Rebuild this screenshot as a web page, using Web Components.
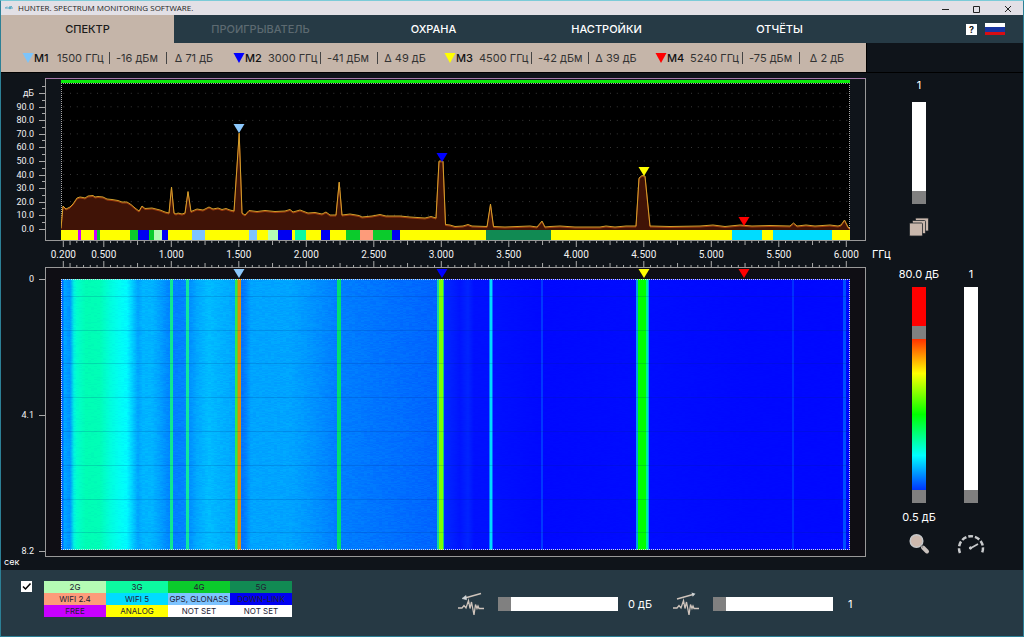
<!DOCTYPE html>
<html lang="ru">
<head>
<meta charset="utf-8">
<title>HUNTER. SPECTRUM MONITORING SOFTWARE.</title>
<style>
html,body{margin:0;height:100%}
body{background:#0f141a;color:#fff;font:11px/14px Inter,"Liberation Sans",sans-serif}
</style>
</head>
<body>
<hunter-app></hunter-app>
<script>
const define = (name, html, setup) => customElements.define(name, class extends HTMLElement {
  connectedCallback() {
    if (this.shadowRoot) return;
    const root = this.attachShadow({mode: 'open'});
    root.innerHTML = typeof html === 'function' ? html(this) : html;
    if (setup) setup(this, root);
  }
});

/* Frequency (GHz) to a percentage of the plot width. */
const PLOT_X = 61, PLOT_W = 789;
const pct = f => (63.3 + (f - 0.2) * 135 - PLOT_X) / PLOT_W * 100;

define('title-bar', `
<style>
:host{display:flex;align-items:center;height:14px;background:#e2e0e6;color:#222;font:8px/14px "Open Sans",sans-serif;padding-left:4px}
.logo{width:8px;height:6px;margin-right:5px}
.name{flex:1}
button{all:unset;width:31px;height:14px;display:grid;place-items:center;padding-top:2px;box-sizing:border-box}
svg{display:block}
</style>
<svg class="logo" viewBox="0 0 8 6"><path d="M0 3h8M2 1.500l-1.500 1.500M4 2l3-.5" stroke="#5aa9c4" fill="none"/><circle cx="5" cy="3" r="1.300" fill="#5aa9c4"/></svg>
<span class="name"><slot></slot></span>
<button aria-label="Свернуть"><svg width="8" height="8" stroke="#222"><path d="M0 4.500h7"/></svg></button>
<button aria-label="Развернуть"><svg width="8" height="8" stroke="#222" fill="none"><path d="M.5 1.500h6v6h-6z"/></svg></button>
<button aria-label="Закрыть"><svg width="8" height="8" stroke="#222"><path d="M1 1l6 6M7 1l-6 6"/></svg></button>`);

define('nav-tabs', `
<style>
:host{display:flex;height:28px;background:#263a45}
nav{flex:1;display:grid;grid-template-columns:repeat(5,1fr)}
button{all:unset;text-align:center;font-weight:500;color:#fff}
button:disabled{color:#5d6a71}
button[aria-current]{background:#c5b5a9;color:#1b1b1b}
.tools{width:157px;box-sizing:border-box;padding-right:18px;display:flex;justify-content:flex-end;align-items:center;gap:8px}
.help{width:11px;height:11px;background:#fff;color:#111;font:bold 9px/11px Inter,sans-serif}
svg{display:block}
</style>
<nav>
<button aria-current="page">СПЕКТР</button><button disabled>ПРОИГРЫВАТЕЛЬ</button><button>ОХРАНА</button><button>НАСТРОЙКИ</button><button>ОТЧЁТЫ</button>
</nav>
<div class="tools"><button class="help">?</button>
<button aria-label="Русский"><svg width="20" height="14"><rect y="1" width="20" height="4" fill="#fff"/><rect y="5" width="20" height="5" fill="#1834a0"/><rect y="10" width="20" height="3" fill="#d80d12"/></svg></button></div>`);

define('marker-readout', el => `
<style>
:host{display:flex;align-items:center;white-space:nowrap;color:#333;font-size:11px}
svg{width:12px;height:10px;flex:none}
b{font-weight:500;color:#111;width:23px}
.f{width:50px}.l{width:48px}.d{width:42px;text-align:center}
i{width:1px;height:12px;background:#444;margin:0 6px 0 2px}
</style>
<svg viewBox="0 0 12 10"><path d="M.5 0h11l-5.500 10z" fill="${el.getAttribute('color')}"/></svg>
<b>${el.getAttribute('name')}</b><span class="f">${el.getAttribute('freq')}</span><i></i>
<span class="l">${el.getAttribute('level')}</span><i></i><span class="d">${el.getAttribute('delta')}</span>`);

define('marker-bar', `
<style>
:host{display:flex;height:29px;border-bottom:1px solid #000}
.list{flex:1;background:#c5b5a9;display:grid;grid-template-columns:repeat(4,1fr);padding-left:21px}
.rest{width:157px;border-left:1px solid #000;box-sizing:border-box}
</style>
<div class="list">
<marker-readout color="#7cc4fb" name="M1" freq="1500 ГГц" level="-16 дБм" delta="Δ 71 дБ"></marker-readout>
<marker-readout color="#0000ff" name="M2" freq="3000 ГГц" level="-41 дБм" delta="Δ 49 дБ"></marker-readout>
<marker-readout color="#ffff00" name="M3" freq="4500 ГГц" level="-42 дБм" delta="Δ 39 дБ"></marker-readout>
<marker-readout color="#ff0000" name="M4" freq="5240 ГГц" level="-75 дБм" delta="Δ 2 дБ"></marker-readout>
</div><div class="rest"></div>`);

define('axis-scale', el => `
<style>
:host{display:flex;flex-direction:column;justify-content:space-between;font:9px/10px Roboto,sans-serif;color:#f2f2f2;box-sizing:border-box}
span{position:relative;height:10px;text-align:right;padding-right:11px}
span::after{content:"";position:absolute;right:0;top:5px;width:6px;height:1px;background:#aaa}
:host([minor]) span:not(:first-child)::before{content:"";position:absolute;right:0;top:-2px;width:3px;height:1px;background:#aaa}
:host([minor]) span:first-child{font-size:11px;padding-right:13px}
</style>${el.getAttribute('labels').split(' ').map(t => `<span>${t}</span>`).join('')}`);

define('plot-marker', el => `
<style>
:host{position:absolute;left:${pct(+el.getAttribute('at'))}%;bottom:${el.getAttribute('up') || 0}px;width:0;height:9px}
svg{display:block;width:12px;height:9px;margin-left:-6px}
</style><svg viewBox="0 0 12 9"><path d="M.5 0h11l-5.500 9z" fill="${el.getAttribute('color')}"/></svg>`);

const TRACE = 'M61 228L63 206L66 209L70 207L73 204L77 198L80 197L83 197.500L85 198L88 196L93 195.500L95 197L98 196.500L103 197L107 199L112 199.500L118 200.500L122 202L127 202L131 204.500L135 208L139 211L142 206L145 208.500L152 208L160 210L165 212L169 213L171.500 187L174 213L176 214L178 213L182 214L185 213L188 191.500L191 211.500L197 209L203 210L209 207L213 209L218 208L222 209.500L226 208.500L230 210L234 211L239.200 133L242 213L245 215L249 210.500L257 211.500L265 210.500L275 211.500L285 211L290 209.500L293 212L300 210L308 213L315 212.500L322 214L326 212L330 215L336 215L339.200 182L342 215L350 214L359 215.500L362 217L372 216L380 214.500L386 216L400 216L410 217L425 218L431 216.500L436 218L439 161L443 161L445.500 224.500L450 225L455 226.500L463 226L468 224.500L472 226L487 226.500L490.500 204L493.500 226.500L505 227L530 226L537 227L542 221L545 227L550 226.500L560 226L575 227L600 227L606 226L615 227L626 226L636 226L639 178L642 175.500L645 176L650 226L670 226.500L700 226L713 225L725 226.500L740 225L752 226L770 225.500L790 226L793.500 223L797 226L806 225L815 226L830 225L838 226L841 225L844.500 220L848 227L850 229';

const Y = '#ffff00', G = '#0bcb2c', B = '#0000f2', L = '#b5fbb4', S = '#7dc3ff', M = '#c800ff', A = '#0cfaa0', O = '#fd9b7a', D = '#118a53', C = '#00dcff';
const BANDS = [[78,Y],[81,M],[94,Y],[97,M],[100,G],[130,Y],[138,G],[149,B],[154,G],[162,L],[168,B],[192,Y],[205,S],[249,Y],[257,S],[268,Y],[278,L],[292,B],[295,Y],[306,A],[321,Y],[330,B],[346,Y],[360,G],[373,O],[392,G],[400,B],[486,Y],[551,D],[732,Y],[762,C],[773,Y],[832,C],[850,Y]];

define('spectrum-plot', () => {
  let last = PLOT_X;
  const bands = BANDS.map(([end, c]) => { const w = end - last; last = end; return `<i style="flex:${w} 0 0px;background:${c}"></i>`; }).join('');
  let dots = '';
  for (let f = .2; f < 6.02; f += .05)
    for (let k = 1; k <= 10; k++) dots += `M${(63.3 + (f - .2) * 135).toFixed(1)} ${(228.7 - k * 13.54).toFixed(1)}h1`;
  return `
<style>
:host{display:flex;flex-direction:column;border:1px solid #999;border-top-color:#a678a8;padding:1px 15px 0;box-sizing:border-box}
.scan{height:3px;background:#0ceb0c}
.plot{position:relative;flex:1;background:#000;outline:1px dotted #a8a8a8;outline-offset:-1px;min-height:0}
.plot>svg{position:absolute;width:100%;height:100%}
.bands{display:flex;height:10px}
path{vector-effect:non-scaling-stroke}
</style>
<div class="scan"></div>
<div class="plot"><svg viewBox="61 83 789 147" preserveAspectRatio="none">
<path d="${dots}" stroke="#383838" fill="none"/>
<path d="${TRACE}V230H61Z" fill="#401306"/>
<path d="${TRACE}" transform="translate(0 1)" stroke="#a33c0c" fill="none"/>
<path d="${TRACE}" stroke="#d2a02c" fill="none"/></svg>
<plot-marker at="1.5" up="97" color="#8cc8fc"></plot-marker>
<plot-marker at="3.003" up="68" color="#0000ff"></plot-marker>
<plot-marker at="4.5" up="54" color="#ffff00"></plot-marker>
<plot-marker at="5.24" up="4" color="#ff0000"></plot-marker></div>
<div class="bands">${bands}</div>`;
});

define('frequency-axis', () => {
  let s = '';
  for (let i = 4; i <= 120; i++) {
    const f = i * .05, x = pct(f).toFixed(3) + '%';
    const n = i === 4 || i % 10 === 0 ? 6 : i % 5 === 0 ? 4 : 2;
    s += `<line x1="${x}" x2="${x}" y1="0" y2="${n}"/><line x1="${x}" x2="${x}" y1="${26 - n}" y2="26"/>`;
    if (n === 6) s += `<text x="${x}" y="17">${f.toFixed(3)}</text>`;
  }
  return `<style>:host{display:block;padding:0 16px}
svg{display:block;width:100%;height:26px;overflow:visible;stroke:#aaa}
text{font:10px Roboto,sans-serif;fill:#f2f2f2;stroke:none;text-anchor:middle}</style><svg>${s}</svg>`;
});

const STOPS = [[61,'#0050ff'],[63,'#0070ff'],[64,'#00a8ff'],[66,'#00a0ff'],[70,'#0094ff'],[74,'#00f0e0'],[77,'#00ffcc'],[86,'#00ffb4'],[100,'#00ffb8'],[110,'#00ffdc'],[120,'#00fff4'],[127,'#00f8ff'],[132,'#00d0ff'],[138,'#00a4ff'],[143,'#00b4ff'],[152,'#00b4ff'],[160,'#00a0ff'],[168,'#0088ff'],[175,'#0080ff'],[184,'#0084ff'],[191,'#0094ff'],[197,'#00a8ff'],[209,'#00bcff'],[216,'#00b4ff'],[234,'#00a8ff'],[242,'#0074ff'],[246,'#0084ff'],[251,'#00a4ff'],[290,'#00a4ff'],[312,'#0094ff'],[335,'#0080ff'],[380,'#0074ff'],[437,'#0064ff'],[445,'#0028ff'],[460,'#0014ff'],[468,'#0024ff'],[474,'#0010ff'],[492,'#0010ff'],[545,'#0008ff'],[650,'#000cff'],[750,'#0008ff'],[850,'#0008ff']];
const LINES = [[170,3,'#10e890'],[186,3,'#10e8a0'],[235,2,'#30e850'],[237,1,'#80c020'],[238,3,'#e08c10'],[337,4,'#00e070'],[437,2,'#10d8a0'],[439,4,'#80ff00'],[443,1,'#10d080'],[489,1,'#0080ff'],[490,2,'#00dcff'],[492,1,'#0070ff'],[541,2,'#0038ff'],[636,2,'#00a0e8'],[638,8,'#00ff00'],[646,2,'#00f0a0'],[648,1,'#00a0ff'],[792,2,'#0030ff'],[843,3,'#0050ff']];

define('waterfall-plot', `
<style>
:host{display:flex;flex-direction:column;border:1px solid #999;padding:0 15px 6px;box-sizing:border-box;background:#0f0e14;min-height:0}
.pins{position:relative;height:11px}
.view{flex:1;min-height:0;position:relative}
.view::after{content:"";position:absolute;inset:0;border:1px dotted #ddd}
canvas{position:absolute;width:100%;height:100%}
</style>
<div class="pins"><plot-marker up="1" at="1.5" color="#8cc8fc"></plot-marker><plot-marker up="1" at="3.003" color="#0000ff"></plot-marker><plot-marker up="1" at="4.5" color="#ffff00"></plot-marker><plot-marker up="1" at="5.24" color="#ff0000"></plot-marker></div>
<div class="view"><canvas width="789" height="271"></canvas></div>`, (el, root) => {
  const c = root.querySelector('canvas'), g = c.getContext('2d'), grad = g.createLinearGradient(0, 0, PLOT_W, 0);
  STOPS.forEach(([x, col]) => grad.addColorStop((x - PLOT_X) / PLOT_W, col));
  g.fillStyle = grad; g.fillRect(0, 0, PLOT_W, 271);
  let seed = 7;
  const rnd = () => (seed = (seed * 1103515245 + 12345) % 2147483648) / 2147483648;
  const img = g.getImageData(0, 0, PLOT_W, 271), d = img.data;
  for (let y = 0; y < 271; y++) for (let x = 0; x < PLOT_W; x += 3) {
    const amp = x < 380 ? 14 : 3, n = (rnd() - .5) * amp;
    for (let k = 0; k < 3 && x + k < PLOT_W; k++) { const i = (y * PLOT_W + x + k) * 4 + 1; d[i] += n; }
  }
  g.putImageData(img, 0, 0);
  LINES.forEach(([x, w, col]) => { g.fillStyle = col; g.fillRect(x - PLOT_X, 0, w, 271); });
  g.fillStyle = 'rgba(0,40,120,.16)';
  [17, 51, 84, 118, 152, 186, 220, 253].forEach(y => g.fillRect(0, y, PLOT_W, 1));
});

define('level-slider', el => {
  const v = el.hasAttribute('vertical');
  return `
<style>
:host{display:block;position:relative;${v ? 'width:14px' : 'width:120px;height:14px'}}
input{appearance:none;display:block;position:absolute;inset:0;margin:0;width:100%;height:100%;background:#fff;${v ? 'writing-mode:vertical-lr;direction:rtl' : ''}}
input::-webkit-slider-thumb{appearance:none;width:${v ? 14 : 13}px;height:${v ? 13 : 14}px;background:#808080;border:0;border-radius:0}
</style><input type="range" min="0" max="100" value="0" aria-label="${el.getAttribute('label')}">`;
});

define('palette-slider', `
<style>
:host{display:block;position:relative;width:14px;background:linear-gradient(#f00 0 22%,#ff3000 24%,#ff0 40%,#0f0 59%,#0ff 78%,#0040ff 93%,#0000c0)}
input{position:absolute;inset:0;appearance:none;margin:0;width:100%;height:100%;background:none;pointer-events:none;writing-mode:vertical-lr;direction:rtl}
input::-webkit-slider-thumb{appearance:none;pointer-events:auto;width:14px;height:13px;background:#808080;border:0}
</style>
<input type="range" min="0" max="100" value="81" aria-label="Верхний уровень"><input type="range" min="0" max="100" value="0" aria-label="Нижний уровень">`);

define('spectrum-tools', `
<style>
:host{display:flex;flex-direction:column;align-items:center;width:52px;margin-left:27px;box-sizing:border-box}
level-slider{height:102px;margin:10px 0 13px}
button{all:unset}svg{display:block}
</style>
<output>1</output><level-slider vertical label="Усреднение"></level-slider>
<button aria-label="Слои"><svg width="20" height="20" viewBox="0 0 20 20" fill="#c9b7ac" stroke="#20242a" stroke-width=".8"><rect x="6.500" y="1" width="13" height="13" rx="1"/><rect x="3.500" y="3.500" width="13" height="13" rx="1"/><rect x=".5" y="6" width="13" height="13" rx="1"/></svg></button>`);

define('waterfall-tools', `
<style>
:host{display:flex;margin-left:27px;min-height:0}
div{width:52px;display:flex;flex-direction:column;align-items:center;white-space:nowrap}
palette-slider,level-slider{flex:1;min-height:0;margin:6px 0 7px}
output{display:block;height:14px}
.low{margin-bottom:7px}
button{all:unset;height:26px;display:grid;place-items:center}
svg{display:block}
</style>
<div><output>80.0 дБ</output><palette-slider></palette-slider><output class="low">0.5 дБ</output>
<button aria-label="Масштаб"><svg width="22" height="22" viewBox="0 0 22 22"><circle cx="8.500" cy="8" r="6.300" fill="#cdb9ae" stroke="#c6c8ca" stroke-width="1.500"/><path d="M15 14.500l4 4" stroke="#c9c1bd" stroke-width="4" stroke-linecap="round"/><path d="M13 12.500l2 2" stroke="#888" stroke-width="1.500"/></svg></button></div>
<div><output>1</output><level-slider vertical label="Скорость"></level-slider><output class="low"></output>
<button aria-label="Скорость развёртки"><svg width="28" height="26" viewBox="0 0 28 26" fill="none" stroke="#c8cacc"><path d="M3 22A12 12 0 1 1 25 22" stroke-width="2.500" stroke-dasharray="5 1.900"/><path d="M14 17l7-4" stroke-width="1.800"/><circle cx="13.500" cy="17" r="1.200" fill="#c8cacc"/></svg></button></div>`);

define('monitor-view', `
<style>
:host{flex:1 1 0px;display:grid;grid-template-columns:44px 1fr 157px;grid-template-rows:163px 26px minmax(0,1fr) 13px;padding-top:5px;min-height:480px;box-sizing:border-box}
.lv{padding:10px 0 7px}.tm{padding:7px 0 1px}
.hz{grid-column:3;font:11px/26px Inter,sans-serif;padding-left:6px}
frequency-axis{grid-column:2}
.sec{font:9px/10px Inter,sans-serif;padding-left:3px}
</style>
<axis-scale class="lv" minor labels="дБ 90.0 80.0 70.0 60.0 50.0 40.0 30.0 20.0 10.0 0.0"></axis-scale>
<spectrum-plot></spectrum-plot><spectrum-tools></spectrum-tools>
<frequency-axis></frequency-axis><span class="hz">ГГц</span>
<axis-scale class="tm" labels="0 4.1 8.2"></axis-scale>
<waterfall-plot></waterfall-plot><waterfall-tools></waterfall-tools>
<span class="sec">сек</span>`);

define('band-legend', `
<style>
:host{display:flex;align-items:flex-start;gap:12px}
input{appearance:none;margin:0;width:11px;height:11px;background:#fff}
input:checked{background:#fff url('data:image/svg+xml,<svg xmlns="http://www.w3.org/2000/svg" viewBox="0 0 11 11"><path d="M2 5.500L4.500 8L9.500 2.500" fill="none" stroke="black" stroke-width="1.500"/></svg>')}
table{border-collapse:collapse;table-layout:fixed;width:248px}
td{padding:0;height:12px;font:8px/12px Inter,sans-serif;color:#223;text-align:center;white-space:nowrap}
</style>
<input type="checkbox" checked aria-label="Показывать диапазоны">
<table>
<tr><td style="background:#b5fbb4">2G<td style="background:#0cfaa0">3G<td style="background:#0bcb2c">4G<td style="background:#118a53">5G</tr>
<tr><td style="background:#fd9b7a">WIFI 2.4<td style="background:#00dcff">WIFI 5<td style="background:#7dc3ff">GPS, GLONASS<td style="background:#0000f2">DOWN-LINK</tr>
<tr><td style="background:#c800ff">FREE<td style="background:#ff0">ANALOG<td style="background:#fff">NOT SET<td style="background:#fff">NOT SET</tr>
</table>`);

define('signal-icon', el => `
<style>:host{display:block}svg{display:block}</style>
<svg width="27" height="24" viewBox="0 0 27 24" fill="none" stroke="#cfc4bc" stroke-width="1.300">
<path d="M0 16h4l2-2.500 2 2.500 2.500-7.500 1.500 8 1.500-6.500 2.500 13 1.500-10.500 1.500 4 1-2.500 1 2.500h5"/>
${el.hasAttribute('up') ? '<path d="M4 7L20 2.500"/><path d="M18.500.5l4 1.300-2.800 3z" fill="#cfd4d6" stroke="none"/>' : '<path d="M7 6L23 1.500"/><path d="M8 3.500l-4 3 4.500 1.300z" fill="#cfd4d6" stroke="#cfd4d6" stroke-width=".6"/>'}
</svg>`);

define('status-footer', `
<style>
:host{display:flex;height:66px;box-sizing:border-box;background:#263944;padding:11px 170px 0 20px}
.set{margin-left:auto;display:flex;align-items:center;height:46px}
signal-icon{margin-right:13px}
output{margin-left:10px;width:45px}
output.one{width:5px;margin-left:15px}
</style>
<band-legend></band-legend>
<div class="set"><signal-icon></signal-icon><level-slider label="Смещение"></level-slider><output>0 дБ</output>
<signal-icon up></signal-icon><level-slider label="Усиление"></level-slider><output class="one">1</output></div>`);

define('hunter-app', `
<style>
:host{display:flex;flex-direction:column;min-height:100vh;box-sizing:border-box;border:1px solid #2c8096;border-top-color:#7ccbd8;background:#0f141a}
</style>
<title-bar>HUNTER. SPECTRUM MONITORING SOFTWARE.</title-bar>
<nav-tabs></nav-tabs><marker-bar></marker-bar><monitor-view></monitor-view><status-footer></status-footer>`);
</script>
</body>
</html>
